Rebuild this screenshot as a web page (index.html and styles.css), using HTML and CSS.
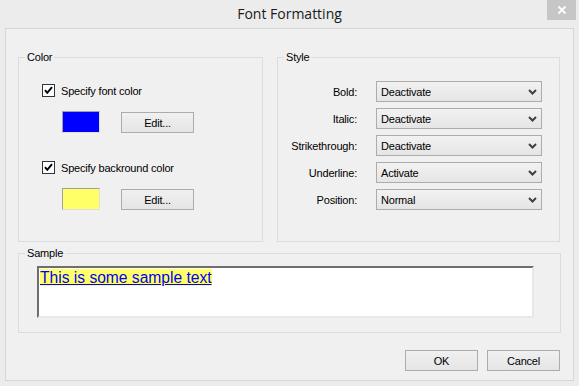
FILE: index.html
```html
<!DOCTYPE html>
<html>
<head>
<meta charset="utf-8">
<link rel="stylesheet" href="styles.css">
</head>
<body>
<div class="window">
  <div class="titlebar">
    <span class="title">Font Formatting</span>
    <button class="close" aria-label="Close">
      <svg width="10" height="10" viewBox="0 0 10 10"><path d="M1.5 1.5 L8.5 8.5 M8.5 1.5 L1.5 8.5" stroke="#fff" stroke-width="1.8" fill="none"/></svg>
    </button>
  </div>
  <div class="client">
    <div class="top-groups">
      <fieldset class="group color-group">
        <legend>Color</legend>
        <div class="color-block first">
          <label class="check-row">
            <span class="checkbox"><svg width="11" height="11" viewBox="0 0 11 11"><path d="M2 5.2 L4.3 7.8 L9 2.2" stroke="#000" stroke-width="2" fill="none"/></svg></span>
            <span>Specify font color</span>
          </label>
          <div class="swatch-row">
            <span class="swatch blue"></span>
            <button class="btn edit">Edit...</button>
          </div>
        </div>
        <div class="color-block second">
          <label class="check-row">
            <span class="checkbox"><svg width="11" height="11" viewBox="0 0 11 11"><path d="M2 5.2 L4.3 7.8 L9 2.2" stroke="#000" stroke-width="2" fill="none"/></svg></span>
            <span>Specify backround color</span>
          </label>
          <div class="swatch-row">
            <span class="swatch yellow"></span>
            <button class="btn edit">Edit...</button>
          </div>
        </div>
      </fieldset>
      <fieldset class="group style-group">
        <legend>Style</legend>
        <div class="style-grid">
          <span class="field-label">Bold:</span>
          <div class="dropdown"><span>Deactivate</span><svg width="9" height="6" viewBox="0 0 9 6"><path d="M1 1 L4.5 4.5 L8 1" stroke="#404040" stroke-width="2" fill="none"/></svg></div>
          <span class="field-label">Italic:</span>
          <div class="dropdown"><span>Deactivate</span><svg width="9" height="6" viewBox="0 0 9 6"><path d="M1 1 L4.5 4.5 L8 1" stroke="#404040" stroke-width="2" fill="none"/></svg></div>
          <span class="field-label">Strikethrough:</span>
          <div class="dropdown"><span>Deactivate</span><svg width="9" height="6" viewBox="0 0 9 6"><path d="M1 1 L4.5 4.5 L8 1" stroke="#404040" stroke-width="2" fill="none"/></svg></div>
          <span class="field-label">Underline:</span>
          <div class="dropdown"><span>Activate</span><svg width="9" height="6" viewBox="0 0 9 6"><path d="M1 1 L4.5 4.5 L8 1" stroke="#404040" stroke-width="2" fill="none"/></svg></div>
          <span class="field-label">Position:</span>
          <div class="dropdown"><span>Normal</span><svg width="9" height="6" viewBox="0 0 9 6"><path d="M1 1 L4.5 4.5 L8 1" stroke="#404040" stroke-width="2" fill="none"/></svg></div>
        </div>
      </fieldset>
    </div>
    <fieldset class="group sample-group">
      <legend>Sample</legend>
      <div class="sample-box"><span class="sample-text">This is some sample text</span></div>
    </fieldset>
    <div class="actions">
      <button class="btn ok">OK</button>
      <button class="btn cancel">Cancel</button>
    </div>
  </div>
</div>
</body>
</html>
```

FILE: styles.css
```css
* { box-sizing: border-box; }
html, body { margin: 0; padding: 0; }
body {
  width: 579px;
  height: 386px;
  background: #ececec;
  font-family: "Liberation Sans", Arial, sans-serif;
  font-size: 11px;
  letter-spacing: -0.2px;
  color: #000;
  overflow: hidden;
}
.window { width: 579px; height: 386px; }
.titlebar {
  height: 28px;
  display: grid;
  grid-template-columns: 1fr auto 1fr;
  align-items: start;
}
.title {
  grid-column: 2;
  font-family: "Open Sans", "Noto Sans", sans-serif;
  font-size: 14px;
  letter-spacing: 0;
  line-height: 27px;
  color: #1a1a1a;
}
.close {
  grid-column: 3;
  justify-self: end;
  width: 29px;
  height: 20px;
  margin-right: 3px;
  border: 0;
  padding: 0;
  background: #c6c6c6;
  display: flex;
  align-items: center;
  justify-content: center;
}
.client {
  margin: 0 5px 5px 5px;
  border: 1px solid #d6d6d6;
  background: #f0f0f0;
  padding: 21px 12px 9px 12px;
}
.top-groups {
  display: flex;
  gap: 14px;
}
.group {
  margin: 0;
  padding: 0;
  min-width: 0;
  border: 1px solid #dcdcdc;
}
.group legend {
  margin-left: 6px;
  padding: 0 2px;
  line-height: 15px;
  font-size: 11px;
}
.color-group { width: 245px; height: 192px; }
.style-group { width: 283px; height: 192px; }
.color-block { margin-left: 23px; }
.color-block.first { margin-top: 19px; }
.color-block.second { margin-top: 28px; }
.check-row {
  display: flex;
  align-items: center;
  gap: 6px;
  height: 13px;
}
.checkbox {
  width: 13px;
  height: 13px;
  border: 1px solid #333;
  background: #fff;
  display: flex;
  align-items: center;
  justify-content: center;
}
.swatch-row {
  display: flex;
  align-items: flex-end;
  margin-top: 14px;
  margin-left: 20px;
}
.swatch {
  width: 38px;
  height: 22px;
  border: 1px solid #e0e0e0;
  border-top-color: #a0a0a0;
  border-left-color: #a0a0a0;
}
.swatch.blue { background: #0000ff; }
.swatch.yellow { background: #ffff66; }
.btn {
  font-family: "Liberation Sans", Arial, sans-serif;
  font-size: 11px;
  letter-spacing: -0.2px;
  color: #000;
  height: 21px;
  padding: 0;
  border: 1px solid #acacac;
  background: linear-gradient(#f0f0f0, #e5e5e5);
}
.edit { width: 73px; margin-left: 21px; }
.style-grid {
  margin-top: 16px;
  display: grid;
  grid-template-columns: 79px 166px;
  grid-auto-rows: 21px;
  column-gap: 19px;
  row-gap: 6px;
  align-items: center;
}
.field-label { text-align: right; }
.dropdown {
  height: 21px;
  border: 1px solid #acacac;
  background: linear-gradient(#f2f2f2, #e5e5e5);
  display: flex;
  align-items: center;
  justify-content: space-between;
  padding: 0 4px 0 4px;
}
.sample-group { height: 87px; margin-top: 4px; }
.sample-box {
  margin: 5px 0 0 18px;
  width: 497px;
  height: 52px;
  background: #fff;
  border: 2px solid;
  border-color: #6e6e6e #e8e8e8 #e8e8e8 #6e6e6e;
  padding: 1px 0 0 1px;
}
.sample-text {
  font-family: "Liberation Sans", Arial, sans-serif;
  font-size: 15.6px;
  letter-spacing: 0;
  color: #0000ff;
  background: #ffff66;
  text-decoration: underline;
}
.actions {
  margin-top: 17px;
  display: flex;
  justify-content: flex-end;
  gap: 9px;
  padding-right: 1px;
}
.ok { width: 73px; }
.cancel { width: 73px; }
```
